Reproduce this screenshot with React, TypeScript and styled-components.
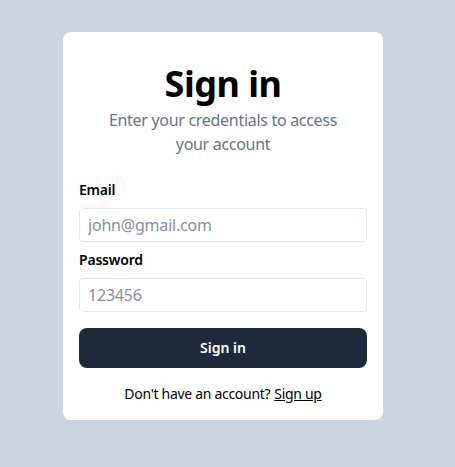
import React from "react";
import styled, { createGlobalStyle } from "styled-components";

const Global = createGlobalStyle`
  * { box-sizing: border-box; }
  html, body { margin: 0; padding: 0; }
  body {
    font-family: "Noto Sans", "Open Sans", sans-serif;
    background: #cbd5e1;
  }
`;

const Page = styled.div`
  min-height: 467px;
  display: flex;
  justify-content: center;
  align-items: flex-start;
  padding: 32px 9px 0 0;
`;

const Card = styled.div`
  width: 320px;
  background: #ffffff;
  border-radius: 8px;
  padding: 8px 16px;
  text-align: center;
`;

const Heading = styled.h1`
  margin: 0;
  padding-top: 24px;
  font-size: 36px;
  line-height: 40px;
  font-weight: 700;
  letter-spacing: -0.5px;
  color: #000;
`;

const SubHeading = styled.p`
  margin: 0;
  padding: 4px 16px 16px;
  font-size: 16px;
  line-height: 24px;
  color: #64748b;
  letter-spacing: -0.3px;
`;

const Field = styled.div`
  text-align: left;
`;

const Label = styled.label`
  display: block;
  padding: 8px 0;
  font-size: 14px;
  line-height: 20px;
  font-weight: 600;
  letter-spacing: -0.2px;
  color: #000;
`;

const Input = styled.input`
  display: block;
  width: 100%;
  padding: 4px 8px;
  font-family: inherit;
  font-size: 16px;
  line-height: 24px;
  height: 34px;
  border: 1px solid #e2e8f0;
  border-radius: 4px;
  color: #000;
  letter-spacing: -0.2px;
  outline: none;
  &::placeholder { color: #8a8f98; }
`;

const ButtonWrap = styled.div`
  padding-top: 16px;
`;

const Button = styled.button`
  width: 100%;
  height: 40px;
  margin-bottom: 8px;
  border: none;
  border-radius: 8px;
  background: #1e293b;
  color: #fff;
  font-family: inherit;
  font-size: 14px;
  font-weight: 600;
  line-height: 20px;
`;

const Bottom = styled.div`
  display: flex;
  justify-content: center;
  padding: 8px 0;
  font-size: 14px;
  line-height: 20px;
  letter-spacing: -0.3px;
  color: #000;
`;

const LinkText = styled.a`
  padding-left: 4px;
  text-decoration: underline;
  color: #000;
  cursor: pointer;
`;

export default function App() {
  return (
    <>
      <Global />
      <Page>
        <Card>
          <Heading>Sign in</Heading>
          <SubHeading>Enter your credentials to access your account</SubHeading>
          <Field>
            <Label>Email</Label>
            <Input placeholder="john@gmail.com" />
          </Field>
          <Field>
            <Label>Password</Label>
            <Input placeholder="123456" />
          </Field>
          <ButtonWrap>
            <Button>Sign in</Button>
          </ButtonWrap>
          <Bottom>
            Don't have an account?<LinkText>Sign up</LinkText>
          </Bottom>
        </Card>
      </Page>
    </>
  );
}
